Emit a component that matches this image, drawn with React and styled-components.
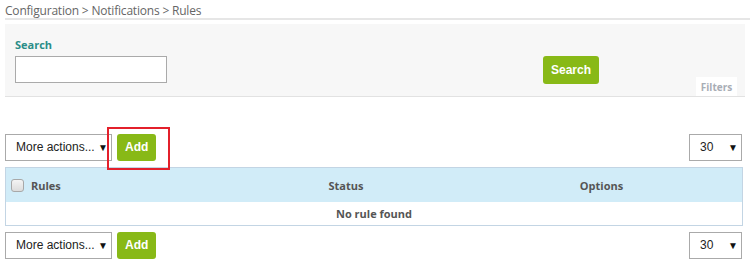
import React from "react";
import styled, { createGlobalStyle } from "styled-components";

const GlobalStyle = createGlobalStyle`
  body {
    margin: 0;
    background: #fff;
    font-family: "Open Sans", sans-serif;
  }
`;

const Page = styled.div`
  width: 750px;
  padding-left: 5px;
  box-sizing: border-box;
`;

const Breadcrumb = styled.div`
  height: 20px;
  box-sizing: border-box;
  padding-top: 2px;
  font-size: 12px;
  letter-spacing: -0.2px;
  color: #666;
  border-bottom: 2px solid #e6e6e6;
`;

const SearchPanel = styled.div`
  margin-top: 4px;
  height: 72px;
  background: #f7f7f7;
  border-bottom: 1px solid #e2e2e2;
  display: flex;
  align-items: flex-start;
  padding-left: 10px;
  margin-right: 5px;
`;

const Field = styled.div`
  display: flex;
  flex-direction: column;
  padding-top: 13px;
`;

const Label = styled.label`
  font-size: 11px;
  font-weight: 700;
  color: #2a8d88;
  line-height: 16px;
  margin-bottom: 3px;
`;

const TextInput = styled.input`
  width: 152px;
  height: 27px;
  box-sizing: border-box;
  border: 1px solid #aaa;
  background: #fff;
`;

const GreenButton = styled.button`
  height: ${(p) => p.$h || 28}px;
  padding: 0 ${(p) => p.$px || 8}px;
  border: none;
  border-radius: 3px;
  background: #88b917;
  color: #fff;
  font-family: "Liberation Sans", Arial, sans-serif;
  font-size: 12px;
  font-weight: 700;
  cursor: pointer;
`;

const SearchBtnWrap = styled.div`
  margin-left: 376px;
  padding-top: 32px;
`;

const FiltersTab = styled.div`
  margin-left: auto;
  margin-right: 8px;
  align-self: flex-end;
  width: 41px;
  height: 19px;
  background: #fff;
  color: #a8adb5;
  font-size: 10px;
  font-weight: 700;
  text-align: center;
  line-height: 20px;
`;

const Toolbar = styled.div`
  display: flex;
  align-items: center;
  gap: 5px;
  height: 28px;
  margin-top: ${(p) => p.$mt}px;
  width: 737px;
`;

const Select = styled.div`
  width: ${(p) => p.$w}px;
  height: 27px;
  box-sizing: border-box;
  border: 1px solid #aaa;
  background: #fff;
  display: flex;
  align-items: center;
  justify-content: space-between;
  padding: 0 3px 0 10px;
  font-family: "Liberation Sans", Arial, sans-serif;
  font-size: 12px;
  color: #222;
  margin-left: ${(p) => (p.$right ? "auto" : "0")};
`;

const Arrow = styled.span`
  font-size: 10px;
  color: #111;
`;

const Highlight = styled.div`
  position: relative;
`;

const RedBox = styled.div`
  position: absolute;
  left: -10px;
  top: -7px;
  width: 63px;
  height: 43px;
  box-sizing: border-box;
  border: 2px solid #e3202b;
  pointer-events: none;
`;

const Table = styled.div`
  margin-top: 6px;
  width: 738px;
  border: 1px solid #c3d5e4;
  box-sizing: border-box;
`;

const HeadRow = styled.div`
  display: grid;
  grid-template-columns: 25px 200px 230px 1fr;
  height: 34px;
  align-items: center;
  background: #d1ecf8;
  font-size: 11px;
  font-weight: 700;
  color: #555;
`;

const Cell = styled.div`
  text-align: ${(p) => p.$align || "left"};
`;

const Checkbox = styled.span`
  display: block;
  width: 11px;
  height: 11px;
  margin-left: 5px;
  border: 1px solid #a8a8a8;
  border-radius: 3px;
  background: linear-gradient(#f4f4f4, #dcdcdc);
`;

const EmptyRow = styled.div`
  height: 23px;
  line-height: 23px;
  text-align: center;
  font-size: 11px;
  font-weight: 700;
  color: #555;
`;

const Actions = ({ mt, highlight }) => (
  <Toolbar $mt={mt}>
    <Select $w={107}>
      More actions... <Arrow>▼</Arrow>
    </Select>
    <Highlight>
      <GreenButton $px={8} $h={27}>Add</GreenButton>
      {highlight && <RedBox />}
    </Highlight>
    <Select $w={53} $right>
      30 <Arrow>▼</Arrow>
    </Select>
  </Toolbar>
);

export default function App() {
  return (
    <>
      <GlobalStyle />
      <Page>
        <Breadcrumb>Configuration &gt; Notifications &gt; Rules</Breadcrumb>
        <SearchPanel>
          <Field>
            <Label>Search</Label>
            <TextInput type="text" />
          </Field>
          <SearchBtnWrap>
            <GreenButton $px={8}>Search</GreenButton>
          </SearchBtnWrap>
          <FiltersTab>Filters</FiltersTab>
        </SearchPanel>
        <Actions mt={36} highlight />
        <Table>
          <HeadRow>
            <Checkbox />
            <Cell>Rules</Cell>
            <Cell $align="center">Status</Cell>
            <Cell $align="center">Options</Cell>
          </HeadRow>
          <EmptyRow>No rule found</EmptyRow>
        </Table>
        <Actions mt={5} />
      </Page>
    </>
  );
}
